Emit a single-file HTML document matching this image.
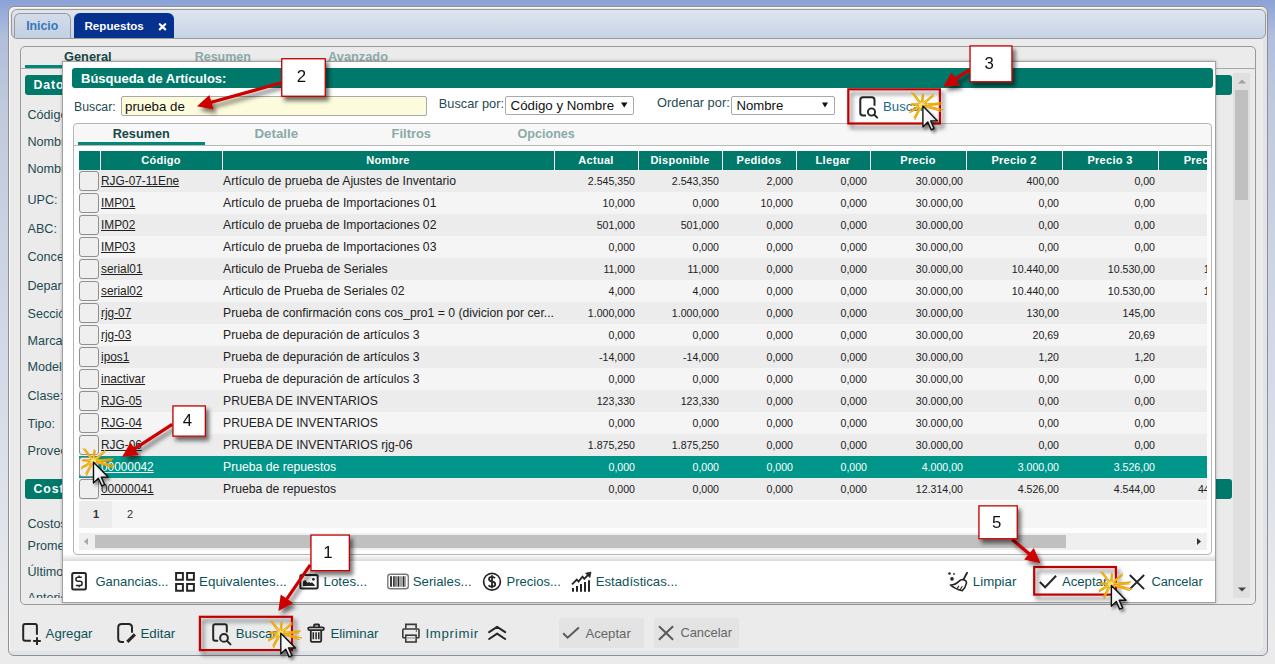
<!DOCTYPE html>
<html><head><meta charset="utf-8">
<style>
*{box-sizing:border-box;margin:0;padding:0}
html,body{width:1275px;height:664px;overflow:hidden}
body{position:relative;font-family:"Liberation Sans",sans-serif;font-size:12px;color:#1f3f44;
background:linear-gradient(to bottom,#8aa2d6 0px,#b0bedd 35px,#c1cadc 110px,#ccd3e1 250px,#d8dde8 420px,#e4e6ea 560px,#ebebeb 640px);}
.a{position:absolute}
.t{position:absolute;white-space:nowrap;line-height:1}
table.g{border-collapse:collapse;table-layout:fixed;width:1175px;font-family:"Liberation Sans",sans-serif}
table.g th{height:19px;background:#00786a;color:#fff;font-size:11px;font-weight:bold;letter-spacing:0.3px;border-left:1px solid #fff;padding:0;text-align:center;line-height:19px;white-space:nowrap;overflow:hidden}
table.g th:first-child{border-left:none}
table.g td{height:22px;padding:0;white-space:nowrap;overflow:hidden;color:#222;line-height:22px}
table.g tr.o td{background:#ececec}
table.g tr.e td{background:#f5f5f5}
table.g tr.sel td{background:#00968a;color:#fff}
table.g td.cod{font-size:11.85px;padding-left:1px}
table.g td.cod u{text-decoration:underline;text-underline-offset:1px}
table.g td.nom{font-size:12.2px;padding-left:1px}
table.g td.n{font-size:10.6px;text-align:right;padding-right:3px}
.cb{width:20px;height:20px;border:1px solid #8f8f8f;border-radius:3px;background:#efefef}
table.g tr.sel td.cod{font-weight:normal}

</style></head><body>
<div class="a" style="left:8px;top:6px;width:1260px;height:650px;background:#ebebeb;border:1px solid #8f8f8f;border-radius:6px;box-shadow:inset 1px 1px 0 #fafafa,inset -4px -4px 0 #e0e4ea"></div>
<div class="a" style="left:11px;top:9px;width:1255px;height:30px;border:1px solid #9a9a9a;border-radius:6px;background:linear-gradient(to bottom,#dfe5ef,#c7d3e5)"></div>
<div class="a" style="left:14px;top:13px;width:57px;height:25px;border:1px solid #9a9a9a;border-bottom:none;border-radius:6px 6px 0 0;background:linear-gradient(to bottom,#d2dcea,#c3d0e3)"></div>
<div class="t" style="left:26.2px;top:19.89px;font-size:12.3px;font-weight:bold;color:#3577b8;">Inicio</div>
<div class="a" style="left:74px;top:13px;width:100px;height:25px;border-radius:6px 6px 0 0;background:#06318f"></div>
<div class="t" style="left:84.5px;top:20.48px;font-size:11.6px;font-weight:bold;color:#fff;">Repuestos</div>
<svg class="a" style="left:0;top:0" width="200" height="40"><path d="M159.8 24.2 L165.2 29.4 M165.2 24.2 L159.8 29.4" stroke="#fff" stroke-width="2.2" stroke-linecap="round"/></svg>
<div class="a" style="left:20px;top:46px;width:1236px;height:559px;border:1px solid #9a9a9a;border-radius:5px;background:#ebebeb"></div>
<div class="t" style="left:64px;top:50.96px;font-size:12.8px;font-weight:bold;color:#174646;">General</div>
<div class="t" style="left:194.7px;top:51.22px;font-size:12.5px;font-weight:bold;color:#8aaaa8;">Resumen</div>
<div class="t" style="left:328px;top:50.96px;font-size:12.8px;font-weight:bold;color:#8aaaa8;">Avanzado</div>
<div class="a" style="left:25px;top:65px;width:160px;height:3px;background:#00897b"></div>
<div class="a" style="left:21px;top:68px;width:1235px;height:1px;background:#a8a8a8"></div>
<div class="a" style="left:25px;top:75px;width:1207px;height:20px;background:#00786a;border-radius:3px"></div>
<div class="t" style="left:33.6px;top:79.09px;font-size:12.3px;font-weight:bold;color:#fff;letter-spacing:0.9px">Datos</div>
<div class="a" style="left:21px;top:96px;width:1210px;height:502px;overflow:hidden">
<div class="t" style="left:6.5px;top:13.13px;font-size:12.6px;color:#1d4a52">Código:</div>
<div class="t" style="left:6.5px;top:39.63px;font-size:12.6px;color:#1d4a52">Nombre:</div>
<div class="t" style="left:6.5px;top:67.33px;font-size:12.6px;color:#1d4a52">Nombre:</div>
<div class="t" style="left:6.5px;top:97.93px;font-size:12.6px;color:#1d4a52">UPC:</div>
<div class="t" style="left:6.5px;top:127.43px;font-size:12.6px;color:#1d4a52">ABC:</div>
<div class="t" style="left:6.5px;top:155.13px;font-size:12.6px;color:#1d4a52">Concepto:</div>
<div class="t" style="left:6.5px;top:183.83px;font-size:12.6px;color:#1d4a52">Departamento:</div>
<div class="t" style="left:6.5px;top:212.43px;font-size:12.6px;color:#1d4a52">Sección:</div>
<div class="t" style="left:6.5px;top:238.83px;font-size:12.6px;color:#1d4a52">Marca:</div>
<div class="t" style="left:6.5px;top:264.53px;font-size:12.6px;color:#1d4a52">Modelo:</div>
<div class="t" style="left:6.5px;top:293.53px;font-size:12.6px;color:#1d4a52">Clase:</div>
<div class="t" style="left:6.5px;top:322.33px;font-size:12.6px;color:#1d4a52">Tipo:</div>
<div class="t" style="left:6.5px;top:349.33px;font-size:12.6px;color:#1d4a52">Proveedor:</div>
<div class="t" style="left:6.5px;top:421.73px;font-size:12.6px;color:#1d4a52">Costos:</div>
<div class="t" style="left:6.5px;top:443.53px;font-size:12.6px;color:#1d4a52">Promedio:</div>
<div class="t" style="left:6.5px;top:469.53px;font-size:12.6px;color:#1d4a52">Último:</div>
<div class="t" style="left:6.5px;top:495.53px;font-size:12.6px;color:#1d4a52">Anterior:</div>
</div>
<div class="a" style="left:25px;top:479px;width:1207px;height:20px;background:#00786a;border-radius:3px"></div>
<div class="t" style="left:33.6px;top:482.69px;font-size:12.3px;font-weight:bold;color:#fff;letter-spacing:0.9px">Costos</div>
<div class="a" style="left:1233px;top:73px;width:17px;height:525px;background:#e0e0e0"></div>
<div class="a" style="left:1235px;top:90px;width:13px;height:110px;background:#c0c0c0"></div>
<svg class="a" style="left:0;top:0" width="1275" height="664"><path d="M1238 83.5 H1246 L1242 79.5 Z" fill="#a0a0a0"/><path d="M1238 587.5 H1246 L1242 591.5 Z" fill="#444"/></svg>
<div class="a" style="left:62px;top:61px;width:1154px;height:542px;background:#fff;border:1px solid #a0a0a0;box-shadow:0 0 3px rgba(0,0,0,.25)"></div>
<div class="a" style="left:72px;top:68px;width:1141px;height:20px;background:#00786a;border-radius:3px"></div>
<div class="t" style="left:81px;top:71.70px;font-size:13px;font-weight:bold;color:#fff;">Búsqueda de Artículos:</div>
<div class="t" style="left:74px;top:101.19px;font-size:12.3px;font-weight:normal;color:#1f4a4f;">Buscar:</div>
<div class="a" style="left:121px;top:96px;width:306px;height:20px;border:1px solid #a9a9a9;border-radius:2px;background:#fcfbdb"></div>
<div class="t" style="left:125px;top:100.24px;font-size:13.3px;font-weight:normal;color:#111;">prueba de</div>
<div class="t" style="left:438.8px;top:97.51px;font-size:12.75px;font-weight:normal;color:#1f4a4f;">Buscar por:</div>
<div class="a" style="left:505px;top:96px;width:129px;height:19px;border:1px solid #a9a9a9;border-radius:2px;background:#fff"></div>
<div class="t" style="left:510.6px;top:99.04px;font-size:13.3px;font-weight:normal;color:#111;">Código y Nombre</div>
<div class="t" style="left:657px;top:97.43px;font-size:12.84px;font-weight:normal;color:#1f4a4f;">Ordenar por:</div>
<div class="a" style="left:731px;top:96px;width:104px;height:19px;border:1px solid #a9a9a9;border-radius:2px;background:#fff"></div>
<div class="t" style="left:736.4px;top:99.13px;font-size:13.2px;font-weight:normal;color:#111;">Nombre</div>
<svg class="a" style="left:0;top:0" width="1275" height="130"><path d="M621 102.5 H627.5 L624.25 107.5 Z M822 102.5 H828 L825 107.5 Z" fill="#111"/></svg>
<div class="t" style="left:883px;top:100.03px;font-size:13.2px;font-weight:normal;color:#176b8c;">Buscar</div>
<div class="a" style="left:73px;top:123px;width:1139px;height:432px;border:1px solid #b5b5b5;border-radius:4px;background:linear-gradient(to bottom,#f7f7f7 0,#f7f7f7 21px,#fdfdfd 22px)"></div>
<div class="t" style="left:112.7px;top:127.78px;font-size:12.66px;font-weight:bold;color:#174646;">Resumen</div>
<div class="t" style="left:254.5px;top:127.24px;font-size:13.3px;font-weight:bold;color:#8aaaa8;">Detalle</div>
<div class="t" style="left:391.6px;top:127.58px;font-size:12.9px;font-weight:bold;color:#8aaaa8;">Filtros</div>
<div class="t" style="left:517.6px;top:127.88px;font-size:12.55px;font-weight:bold;color:#8aaaa8;">Opciones</div>
<div class="a" style="left:78px;top:142px;width:127px;height:3px;background:#00897b"></div>
<div class="a" style="left:74px;top:145px;width:1137px;height:1px;background:#b8b8b8"></div>
<div class="a" id="grid" style="left:79px;top:151px;width:1128px;height:350px;overflow:hidden"><table class="g"><colgroup><col style="width:21px"><col style="width:122px"><col style="width:332px"><col style="width:84px"><col style="width:84px"><col style="width:74px"><col style="width:74px"><col style="width:96px"><col style="width:96px"><col style="width:96px"><col style="width:96px"></colgroup><tr><th></th><th>Código</th><th>Nombre</th><th>Actual</th><th>Disponible</th><th>Pedidos</th><th>Llegar</th><th>Precio</th><th>Precio 2</th><th>Precio 3</th><th>Precio 4</th></tr><tr class="o"><td><div class="cb"></div></td><td class="cod"><u>RJG-07-11Ene</u></td><td class="nom">Artículo de prueba de Ajustes de Inventario</td><td class="n">2.545,350</td><td class="n">2.543,350</td><td class="n">2,000</td><td class="n">0,000</td><td class="n">30.000,00</td><td class="n">400,00</td><td class="n">0,00</td><td class="n"></td></tr><tr class="e"><td><div class="cb"></div></td><td class="cod"><u>IMP01</u></td><td class="nom">Artículo de prueba de Importaciones 01</td><td class="n">10,000</td><td class="n">0,000</td><td class="n">10,000</td><td class="n">0,000</td><td class="n">30.000,00</td><td class="n">0,00</td><td class="n">0,00</td><td class="n"></td></tr><tr class="o"><td><div class="cb"></div></td><td class="cod"><u>IMP02</u></td><td class="nom">Artículo de prueba de Importaciones 02</td><td class="n">501,000</td><td class="n">501,000</td><td class="n">0,000</td><td class="n">0,000</td><td class="n">30.000,00</td><td class="n">0,00</td><td class="n">0,00</td><td class="n"></td></tr><tr class="e"><td><div class="cb"></div></td><td class="cod"><u>IMP03</u></td><td class="nom">Artículo de prueba de Importaciones 03</td><td class="n">0,000</td><td class="n">0,000</td><td class="n">0,000</td><td class="n">0,000</td><td class="n">30.000,00</td><td class="n">0,00</td><td class="n">0,00</td><td class="n"></td></tr><tr class="o"><td><div class="cb"></div></td><td class="cod"><u>serial01</u></td><td class="nom">Articulo de Prueba de Seriales</td><td class="n">11,000</td><td class="n">11,000</td><td class="n">0,000</td><td class="n">0,000</td><td class="n">30.000,00</td><td class="n">10.440,00</td><td class="n">10.530,00</td><td class="n">10.620,00</td></tr><tr class="e"><td><div class="cb"></div></td><td class="cod"><u>serial02</u></td><td class="nom">Articulo de Prueba de Seriales 02</td><td class="n">4,000</td><td class="n">4,000</td><td class="n">0,000</td><td class="n">0,000</td><td class="n">30.000,00</td><td class="n">10.440,00</td><td class="n">10.530,00</td><td class="n">10.620,00</td></tr><tr class="o"><td><div class="cb"></div></td><td class="cod"><u>rjg-07</u></td><td class="nom">Prueba de confirmación cons cos_pro1 = 0 (divicion por cer...</td><td class="n">1.000,000</td><td class="n">1.000,000</td><td class="n">0,000</td><td class="n">0,000</td><td class="n">30.000,00</td><td class="n">130,00</td><td class="n">145,00</td><td class="n"></td></tr><tr class="e"><td><div class="cb"></div></td><td class="cod"><u>rjg-03</u></td><td class="nom">Prueba de depuración de artículos 3</td><td class="n">0,000</td><td class="n">0,000</td><td class="n">0,000</td><td class="n">0,000</td><td class="n">30.000,00</td><td class="n">20,69</td><td class="n">20,69</td><td class="n"></td></tr><tr class="o"><td><div class="cb"></div></td><td class="cod"><u>ipos1</u></td><td class="nom">Prueba de depuración de artículos 3</td><td class="n">-14,000</td><td class="n">-14,000</td><td class="n">0,000</td><td class="n">0,000</td><td class="n">30.000,00</td><td class="n">1,20</td><td class="n">1,20</td><td class="n"></td></tr><tr class="e"><td><div class="cb"></div></td><td class="cod"><u>inactivar</u></td><td class="nom">Prueba de depuración de artículos 3</td><td class="n">0,000</td><td class="n">0,000</td><td class="n">0,000</td><td class="n">0,000</td><td class="n">30.000,00</td><td class="n">0,00</td><td class="n">0,00</td><td class="n"></td></tr><tr class="o"><td><div class="cb"></div></td><td class="cod"><u>RJG-05</u></td><td class="nom">PRUEBA DE INVENTARIOS</td><td class="n">123,330</td><td class="n">123,330</td><td class="n">0,000</td><td class="n">0,000</td><td class="n">30.000,00</td><td class="n">0,00</td><td class="n">0,00</td><td class="n"></td></tr><tr class="e"><td><div class="cb"></div></td><td class="cod"><u>RJG-04</u></td><td class="nom">PRUEBA DE INVENTARIOS</td><td class="n">0,000</td><td class="n">0,000</td><td class="n">0,000</td><td class="n">0,000</td><td class="n">30.000,00</td><td class="n">0,00</td><td class="n">0,00</td><td class="n"></td></tr><tr class="o"><td><div class="cb"></div></td><td class="cod"><u>RJG-06</u></td><td class="nom">PRUEBA DE INVENTARIOS rjg-06</td><td class="n">1.875,250</td><td class="n">1.875,250</td><td class="n">0,000</td><td class="n">0,000</td><td class="n">30.000,00</td><td class="n">0,00</td><td class="n">0,00</td><td class="n"></td></tr><tr class="sel"><td><div class="cb"></div></td><td class="cod"><u>00000042</u></td><td class="nom">Prueba de repuestos</td><td class="n">0,000</td><td class="n">0,000</td><td class="n">0,000</td><td class="n">0,000</td><td class="n">4.000,00</td><td class="n">3.000,00</td><td class="n">3.526,00</td><td class="n"></td></tr><tr class="o"><td><div class="cb"></div></td><td class="cod"><u>00000041</u></td><td class="nom">Prueba de repuestos</td><td class="n">0,000</td><td class="n">0,000</td><td class="n">0,000</td><td class="n">0,000</td><td class="n">12.314,00</td><td class="n">4.526,00</td><td class="n">4.544,00</td><td class="n">444.544,00</td></tr></table></div>
<div class="a" style="left:79px;top:501px;width:1128px;height:27px;background:#f5f5f5"></div>
<div class="a" style="left:79px;top:501px;width:33px;height:27px;background:#ececec"></div>
<div class="t" style="left:93px;top:509.19px;font-size:11px;font-weight:bold;color:#333;">1</div>
<div class="t" style="left:126.9px;top:509.19px;font-size:11px;font-weight:normal;color:#333;">2</div>
<div class="a" style="left:79px;top:533px;width:1128px;height:17px;background:#efefef"></div>
<div class="a" style="left:95px;top:535px;width:971px;height:13px;background:#c0c0c0"></div>
<svg class="a" style="left:0;top:0" width="1275" height="664"><path d="M84 541.5 L88 538 V545 Z" fill="#a8a8a8"/><path d="M1201 541.5 L1197 538 V545 Z" fill="#333"/></svg>
<div class="a" style="left:63px;top:555px;width:1152px;height:6px;background:linear-gradient(to bottom,#fbfbfb,#d9d9d9)"></div>
<div class="t" style="left:95.5px;top:575.40px;font-size:13.0px;font-weight:normal;color:#0d5258;">Ganancias...</div>
<div class="t" style="left:199px;top:575.06px;font-size:13.4px;font-weight:normal;color:#0d5258;">Equivalentes...</div>
<div class="t" style="left:323.5px;top:575.14px;font-size:13.3px;font-weight:normal;color:#0d5258;">Lotes...</div>
<div class="t" style="left:412.7px;top:575.18px;font-size:13.25px;font-weight:normal;color:#0d5258;">Seriales...</div>
<div class="t" style="left:506.6px;top:575.40px;font-size:13.0px;font-weight:normal;color:#0d5258;">Precios...</div>
<div class="t" style="left:595.7px;top:575.23px;font-size:13.2px;font-weight:normal;color:#0d5258;">Estadísticas...</div>
<div class="t" style="left:972.8px;top:575.14px;font-size:13.3px;font-weight:normal;color:#0d5258;">Limpiar</div>
<div class="t" style="left:1061.9px;top:575.23px;font-size:13.2px;font-weight:normal;color:#0d5258;">Aceptar</div>
<div class="t" style="left:1151.4px;top:575.52px;font-size:12.85px;font-weight:normal;color:#0d5258;">Cancelar</div>
<div class="t" style="left:45.6px;top:626.93px;font-size:13.2px;font-weight:normal;color:#0d5258;">Agregar</div>
<div class="t" style="left:140.5px;top:626.84px;font-size:13.3px;font-weight:normal;color:#0d5258;">Editar</div>
<div class="t" style="left:235.7px;top:626.93px;font-size:13.2px;font-weight:normal;color:#0d5258;">Buscar</div>
<div class="t" style="left:330.5px;top:626.84px;font-size:13.3px;font-weight:normal;color:#0d5258;">Eliminar</div>
<div class="t" style="left:425.4px;top:626.93px;font-size:13.2px;font-weight:normal;color:#0d5258;letter-spacing:0.75px">Imprimir</div>
<div class="a" style="left:559px;top:618px;width:85px;height:30px;background:#e3e3e3;border-radius:3px"></div>
<div class="a" style="left:654px;top:618px;width:85px;height:30px;background:#e3e3e3;border-radius:3px"></div>
<div class="t" style="left:585.4px;top:626.93px;font-size:13.2px;font-weight:normal;color:#666;">Aceptar</div>
<div class="t" style="left:680.4px;top:627.18px;font-size:12.9px;font-weight:normal;color:#666;">Cancelar</div>
<svg class="a" style="left:0;top:0" width="1275" height="664" fill="none" stroke="#262626" stroke-width="2">
<!-- modal footer -->
<rect x="72.2" y="573.1" width="13.7" height="16.5" rx="1.5"/>
<path d="M81.9 577.2 H78 Q75.9 577.2 75.9 579.3 Q75.9 581.3 78 581.3 H80 Q82.1 581.3 82.1 583.4 Q82.1 585.5 80 585.5 H75.8 M79.1 575.6 V577.2 M79.1 585.5 V587.2" stroke-width="1.5"/>
<path d="M176.1 573.1 H182.9 V579.8 H176.1 Z M187.1 573.1 H193.9 V579.8 H187.1 Z M176.1 584.1 H182.9 V590.8 H176.1 Z M187.1 584.1 H193.9 V590.8 H187.1 Z"/>
<rect x="300.3" y="575.1" width="17.4" height="13.4" rx="1.5"/>
<path d="M303 586 V581.5 L305.3 580 L307.3 582.8 L309.3 582 L310.6 583 L312 582.3 L314.8 585 V586 Z" fill="#262626" stroke="none"/>
<circle cx="313.4" cy="579.3" r="1.4" fill="#262626" stroke="none"/>
<rect x="387.8" y="574.2" width="20.5" height="14.6" rx="2.5" stroke="#7a7a7a" stroke-width="1.4"/>
<path d="M391 576.2 V586.8 M394 576.2 V586.8 M398.5 576.2 V586.8 M403.5 576.2 V586.8" stroke="#2a2a2a" stroke-width="1.8"/>
<path d="M396.5 576.2 V586.8 M401 576.2 V586.8 M405 576.2 V586.8 M395.3 576.2 V586.8" stroke="#8a8a8a" stroke-width="1.6"/>
<circle cx="492" cy="581.7" r="8.4" stroke-width="1.7"/>
<path d="M495 578.2 Q494 576.8 492 576.8 Q489 576.8 489 579 Q489 581.2 492 581.5 Q495.2 581.9 495.2 584.2 Q495.2 586.6 491.8 586.6 Q489.6 586.6 488.6 585.4 M492 575.2 V588.2" stroke-width="1.8"/>
<path d="M573 591.8 V588.1 M577 591.8 V586.1 M581 591.8 V584.1 M585 591.8 V582 M589 591.8 V580.2" stroke-width="2"/>
<path d="M572 584.3 L576.8 579.5 L578.5 581.5 L582.5 576.6 L584.3 578.8 L588.6 574.4" stroke-width="1.8"/>
<path d="M591 572.1 L585.6 573.2 L589.9 577.5 Z" fill="#262626" stroke="#262626" stroke-width="0.8" stroke-linejoin="round"/>
<!-- broom -->
<path d="M967.1 572.8 L963.6 579.3" stroke-width="1.8" stroke-linecap="round"/>
<path d="M963 579.5 Q966.8 580.7 966.5 582.8 Q965.5 587.5 962.3 590.8 Q955 589 950.4 585 Q955.5 584.8 958.5 581.6 Q960.5 579.5 963 579.5 Z" stroke-width="1.6" stroke-linejoin="round"/>
<path d="M957 588.5 L959 585.8 M960.2 589.8 L962.3 586.3" stroke-width="1.2"/>
<circle cx="949.5" cy="573.5" r="1.3" fill="#262626" stroke="none"/>
<circle cx="954" cy="573.9" r="0.9" fill="#262626" stroke="none"/>
<circle cx="952" cy="578.9" r="1.8" fill="#262626" stroke="none"/>
<path d="M1039.9 582 L1045.1 587.2 L1056.1 575.7" stroke-width="2"/>
<path d="M1129.8 575 L1144.1 589.1 M1144.1 575 L1129.8 589.1" stroke-width="2"/>
<!-- toolbar -->
<path d="M36.9 634.7 V626 Q36.9 624.1 35 624.1 H25.1 Q23.2 624.1 23.2 626 V638.8 Q23.2 640.7 25.1 640.7 H30.9 M33.1 641 H40.8 M37 637.2 V644.9"/>
<path d="M132 632.7 V627.5 Q132 624 128.5 624 H121.7 Q118.2 624 118.2 627.5 V638.4 Q118.2 641.9 121.7 641.9 H124"/>
<path d="M127.3 641.9 L134.9 634.4" stroke-width="3"/>
<path d="M226.8 632.5 V626.2 Q226.8 624.2 224.8 624.2 H215.2 Q213.2 624.2 213.2 626.2 V638.7 Q213.2 640.7 215.2 640.7 H218.1"/>
<circle cx="224" cy="637.9" r="3.9"/>
<path d="M226.9 640.8 L230.5 644.4" stroke-linecap="round"/>
<!-- trash -->
<rect x="308.2" y="627.4" width="15.7" height="2.8" rx="1.4" stroke-width="1.8"/>
<path d="M314 627 V625.4 Q314 624.5 315 624.5 H318.3 Q319.2 624.5 319.2 625.4 V627" stroke-width="1.8"/>
<path d="M310.8 630.6 V640.5 Q310.8 641.8 312 641.8 H320 Q321.2 641.8 321.2 640.5 V630.6" stroke-width="1.8"/>
<path d="M313.3 632.3 V639.3 M316.1 632.3 V639.3 M318.8 632.3 V639.3" stroke-width="1.5"/>
<!-- printer -->
<path d="M405.8 628.6 V624.4 H416.1 V628.6" stroke="#3a3a3a" stroke-width="1.6"/>
<path d="M405.8 637.7 H403.6 Q402.8 637.7 402.8 636.9 V630 Q402.8 629 404 629 H418 Q419 629 419 630 V636.9 Q419 637.7 418.2 637.7 H416.1" stroke="#3a3a3a" stroke-width="1.6"/>
<rect x="405.8" y="635.2" width="10.3" height="6.8" stroke="#3a3a3a" stroke-width="1.6"/>
<path d="M406.6 637.9 H415.3" stroke="#aaa" stroke-width="1.6"/>
<circle cx="416.4" cy="631" r="0.7" fill="#3a3a3a" stroke="none"/>
<path d="M489.1 632.2 L497.1 626.8 L505.2 632.2 M489.1 639 L497.1 633.6 L505.2 639" stroke-linecap="round" stroke-linejoin="round"/>
<path d="M563.2 633.3 L567.6 637.7 L578.9 627.4" stroke="#5a5a5a"/>
<path d="M659 626.3 L673.1 639.8 M673.1 626.3 L659 639.8" stroke="#5a5a5a"/>
<!-- modal buscar -->
<path d="M874.5 105.8 V100 Q874.5 97.3 871.8 97.3 H863 Q860.3 97.3 860.3 100 V113 Q860.3 115.4 863 115.4 H866" stroke-width="2"/>
<circle cx="871.5" cy="112" r="3.6" stroke-width="1.9"/>
<path d="M874.3 114.8 L877.2 117.6" stroke-width="2" stroke-linecap="round"/>
</svg>

<svg class="a" style="left:0;top:0" width="1275" height="664">
<defs><linearGradient id="cg" x1="0" y1="0" x2="1" y2="1"><stop offset="0" stop-color="#fff"/><stop offset="0.55" stop-color="#f0f0f0"/><stop offset="1" stop-color="#b8b8b8"/></linearGradient><filter id="sh" x="-30%" y="-30%" width="160%" height="160%"><feDropShadow dx="3" dy="4" stdDeviation="2.2" flood-color="#000" flood-opacity="0.55"/></filter>
<filter id="sh2" x="-50%" y="-50%" width="200%" height="200%"><feDropShadow dx="2" dy="2.5" stdDeviation="1.5" flood-color="#000" flood-opacity="0.45"/></filter></defs>
<g filter="url(#sh)">
<rect x="199.9" y="616.8" width="92.1" height="33.30000000000007" fill="none" stroke="#c00000" stroke-width="2.2"/>
<rect x="848.3" y="89.3" width="91.60000000000002" height="34.2" fill="none" stroke="#c00000" stroke-width="2.2"/>
<rect x="1034.2" y="567" width="81.70000000000005" height="27.600000000000023" fill="none" stroke="#c00000" stroke-width="2.2"/>
</g><g filter="url(#sh)">
<path d="M281.4 82.8 L209.5 102.8" stroke="#cc0000" stroke-width="3.2" fill="none"/><path d="M197.0 106.3 L209.4 95.1 L213.5 109.5 Z" fill="#cc0000"/>
<path d="M969.3 69.8 L954.0 79.9" stroke="#cc0000" stroke-width="3.2" fill="none"/><path d="M943.1 87.0 L951.5 72.5 L959.8 85.0 Z" fill="#cc0000"/>
<path d="M172.2 424.4 L132.9 449.8" stroke="#cc0000" stroke-width="3.2" fill="none"/><path d="M122.0 456.9 L130.5 442.5 L138.7 455.0 Z" fill="#cc0000"/>
<path d="M310.2 564.9 L285.8 600.4" stroke="#cc0000" stroke-width="3.2" fill="none"/><path d="M278.4 611.1 L280.7 594.5 L293.1 603.0 Z" fill="#cc0000"/>
<path d="M1012.2 539.5 L1030.6 554.9" stroke="#cc0000" stroke-width="3.2" fill="none"/><path d="M1040.5 563.3 L1024.2 559.4 L1033.8 547.9 Z" fill="#cc0000"/>
</g><g filter="url(#sh)">
<rect x="281.75" y="58.75" width="43.5" height="37.5" fill="#fff" stroke="#c00000" stroke-width="1.3"/><text x="301.3" y="82.2" font-family="Liberation Sans" font-size="16.8" fill="#111" text-anchor="middle">2</text>
<rect x="970.05" y="45.95" width="41.90000000000009" height="35.8" fill="#fff" stroke="#c00000" stroke-width="1.3"/><text x="989.2" y="69.1" font-family="Liberation Sans" font-size="16.8" fill="#111" text-anchor="middle">3</text>
<rect x="172.95" y="405.95" width="32.400000000000006" height="30.19999999999999" fill="#fff" stroke="#c00000" stroke-width="1.3"/><text x="187.5" y="426" font-family="Liberation Sans" font-size="16.8" fill="#111" text-anchor="middle">4</text>
<rect x="310.95" y="535.05" width="38.400000000000034" height="35.60000000000002" fill="#fff" stroke="#c00000" stroke-width="1.3"/><text x="328" y="557.8" font-family="Liberation Sans" font-size="16.8" fill="#111" text-anchor="middle">1</text>
<rect x="978.95" y="505.85" width="38.299999999999955" height="32.89999999999998" fill="#fff" stroke="#c00000" stroke-width="1.3"/><text x="996.7" y="528" font-family="Liberation Sans" font-size="16.8" fill="#111" text-anchor="middle">5</text>
</g>
<path d="M918.9 105.5 L911.2 103.7 L919.2 103.8 L919.5 103.2 L913.4 92.6 L920.9 102.3 L921.4 102.2 L923.6 94.6 L923.0 102.5 L923.3 102.7 L933.7 96.0 L924.3 104.1 L924.4 104.1 L940.4 104.7 L924.4 105.8 L924.5 105.1 L940.8 111.4 L924.0 106.6 L921.0 107.7 L913.9 117.9 L919.6 106.9 L919.7 107.0 L909.8 111.2 L918.9 105.5 Z" fill="#f9ea8c" stroke="#eba300" stroke-width="0.9" stroke-linejoin="miter"/><path d="M919.0 105.8 L910.2 104.7 L919.0 104.1 L919.4 103.5 L911.4 92.5 L920.6 102.4 L921.1 102.3 L922.6 93.5 L922.7 102.4 L923.1 102.6 L933.7 94.0 L924.2 103.8 L924.3 103.9 L941.9 102.7 L924.5 105.5 L924.5 104.8 L943.1 109.8 L924.1 106.4 L921.3 107.8 L914.7 119.8 L919.8 107.1 L919.9 107.2 L909.5 113.0 L919.0 105.8 Z" fill="#f9ea8c" stroke="#eba300" stroke-width="0.9" stroke-linejoin="miter"/><circle cx="921.7" cy="105" r="2.2" fill="#eee27a"/>
<path d="M90.5 461.5 L82.8 459.7 L90.8 459.8 L91.1 459.2 L85.0 448.6 L92.5 458.3 L93.0 458.2 L95.2 450.6 L94.6 458.5 L94.9 458.7 L105.3 452.0 L95.9 460.1 L96.0 460.1 L112.0 460.7 L96.0 461.8 L96.1 461.1 L112.4 467.4 L95.6 462.6 L92.6 463.7 L85.5 473.9 L91.2 462.9 L91.3 463.0 L81.4 467.2 L90.5 461.5 Z" fill="#f9ea8c" stroke="#eba300" stroke-width="0.9" stroke-linejoin="miter"/><path d="M90.6 461.8 L81.8 460.7 L90.6 460.1 L91.0 459.5 L83.0 448.5 L92.2 458.4 L92.7 458.3 L94.2 449.5 L94.3 458.4 L94.7 458.6 L105.3 450.0 L95.8 459.8 L95.9 459.9 L113.5 458.7 L96.1 461.5 L96.1 460.8 L114.7 465.8 L95.7 462.4 L92.9 463.8 L86.3 475.8 L91.4 463.1 L91.5 463.2 L81.1 469.0 L90.6 461.8 Z" fill="#f9ea8c" stroke="#eba300" stroke-width="0.9" stroke-linejoin="miter"/><circle cx="93.3" cy="461" r="2.2" fill="#eee27a"/>
<path d="M277.6 633.7 L269.9 631.9 L277.9 632.0 L278.2 631.4 L272.1 620.8 L279.6 630.5 L280.1 630.4 L282.3 622.8 L281.7 630.7 L282.0 630.9 L292.4 624.2 L283.0 632.3 L283.1 632.3 L299.1 632.9 L283.1 634.0 L283.2 633.3 L299.5 639.6 L282.7 634.8 L279.7 635.9 L272.6 646.1 L278.3 635.1 L278.4 635.2 L268.5 639.4 L277.6 633.7 Z" fill="#f9ea8c" stroke="#eba300" stroke-width="0.9" stroke-linejoin="miter"/><path d="M277.7 634.0 L268.9 632.9 L277.7 632.3 L278.1 631.7 L270.1 620.7 L279.3 630.6 L279.8 630.5 L281.3 621.7 L281.4 630.6 L281.8 630.8 L292.4 622.2 L282.9 632.0 L283.0 632.1 L300.6 630.9 L283.2 633.7 L283.2 633.0 L301.8 638.0 L282.8 634.6 L280.0 636.0 L273.4 648.0 L278.5 635.3 L278.6 635.4 L268.2 641.2 L277.7 634.0 Z" fill="#f9ea8c" stroke="#eba300" stroke-width="0.9" stroke-linejoin="miter"/><circle cx="280.4" cy="633.2" r="2.2" fill="#eee27a"/>
<path d="M1108.0 584.7 L1100.3 582.9 L1108.3 583.0 L1108.6 582.4 L1102.5 571.8 L1110.0 581.5 L1110.5 581.4 L1112.7 573.8 L1112.1 581.7 L1112.4 581.9 L1122.8 575.2 L1113.4 583.3 L1113.5 583.3 L1129.5 583.9 L1113.5 585.0 L1113.6 584.3 L1129.9 590.6 L1113.1 585.8 L1110.1 586.9 L1103.0 597.1 L1108.7 586.1 L1108.8 586.2 L1098.9 590.4 L1108.0 584.7 Z" fill="#f9ea8c" stroke="#eba300" stroke-width="0.9" stroke-linejoin="miter"/><path d="M1108.1 585.0 L1099.3 583.9 L1108.1 583.3 L1108.5 582.7 L1100.5 571.7 L1109.7 581.6 L1110.2 581.5 L1111.7 572.7 L1111.8 581.6 L1112.2 581.8 L1122.8 573.2 L1113.3 583.0 L1113.4 583.1 L1131.0 581.9 L1113.6 584.7 L1113.6 584.0 L1132.2 589.0 L1113.2 585.6 L1110.4 587.0 L1103.8 599.0 L1108.9 586.3 L1109.0 586.4 L1098.6 592.2 L1108.1 585.0 Z" fill="#f9ea8c" stroke="#eba300" stroke-width="0.9" stroke-linejoin="miter"/><circle cx="1110.8" cy="584.2" r="2.2" fill="#eee27a"/>
<g filter="url(#sh2)">
<path d="M922.9 106.1 L922.9 126.9 L927.8 122.1 L931.2 129.8 L934.1 128.5 L930.7 120.9 L937.5 120.9 Z" fill="url(#cg)" stroke="#111" stroke-width="1.4" stroke-linejoin="round"/>
<path d="M93.5 462.3 L93.5 483.1 L98.4 478.3 L101.8 486.0 L104.7 484.7 L101.3 477.1 L108.1 477.1 Z" fill="url(#cg)" stroke="#111" stroke-width="1.4" stroke-linejoin="round"/>
<path d="M280.8 633.2 L280.8 654.0 L285.7 649.2 L289.1 656.9 L292.0 655.6 L288.6 648.0 L295.4 648.0 Z" fill="url(#cg)" stroke="#111" stroke-width="1.4" stroke-linejoin="round"/>
<path d="M1111.4 585.5 L1111.4 606.3 L1116.3 601.5 L1119.7 609.2 L1122.6 607.9 L1119.2 600.3 L1126.0 600.3 Z" fill="url(#cg)" stroke="#111" stroke-width="1.4" stroke-linejoin="round"/>
</g>
</svg>
</body></html>
